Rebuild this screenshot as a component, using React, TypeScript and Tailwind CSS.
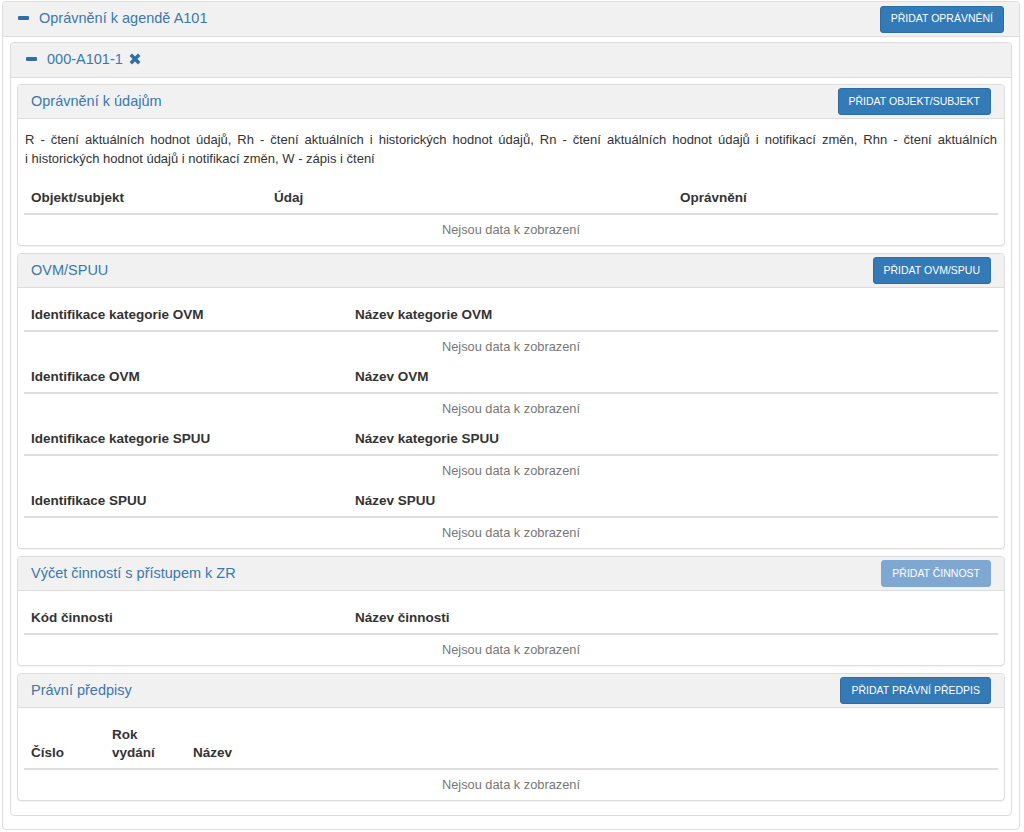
import React from "react";

const Minus = () => <span className="inline-block w-[11px] h-[4px] rounded-[1px] bg-[#2f6ea8] mr-[10px] translate-y-[-1px]" />;

const XMark = () => (
  <svg width="14" height="14" viewBox="0 0 16 16" className="inline-block ml-[5px] translate-y-[-1px]">
    <path d="M1.8 4.6 4.6 1.8 8 5.2 11.4 1.8 14.2 4.6 10.8 8 14.2 11.4 11.4 14.2 8 10.8 4.6 14.2 1.8 11.4 5.2 8Z" fill="#2f6ea8" />
  </svg>
);

function Btn({ label, disabled }: { label: string; disabled?: boolean }) {
  return (
    <button
      className={
        "h-[27px] px-[10px] rounded-[3px] border text-[10.5px] text-white " +
        (disabled ? "bg-[#7ea8d2] border-[#7ea8d2]" : "bg-[#337ab7] border-[#2e6da4]")
      }
    >
      {label}
    </button>
  );
}

function Panel({ title, action, children }: { title: string; action?: React.ReactNode; children: React.ReactNode }) {
  return (
    <div className="mb-[7px] border border-[#dddddd] rounded-[4px] bg-white shadow-[0_1px_1px_rgba(0,0,0,0.05)]">
      <div className="h-[34px] bg-[#f1f1f1] border-b border-[#dddddd] rounded-t-[4px] flex items-center justify-between pl-[13px] pr-[13px]">
        <span className="text-[14.5px] text-[#3a78ae]">{title}</span>
        {action}
      </div>
      <div className="px-[6px]">{children}</div>
    </div>
  );
}

function Head({ cols }: { cols: { label: React.ReactNode; w: string }[] }) {
  return (
    <div className="flex items-end border-b-2 border-[#dddddd] min-h-[32px] text-[13.5px] font-bold text-[#333] leading-[18px]">
      {cols.map((c, i) => (
        <div key={i} className={"px-[7px] pt-[6px] pb-[6px] " + c.w}>
          {c.label}
        </div>
      ))}
    </div>
  );
}

const NoData = () => (
  <div className="h-[30px] flex items-center justify-center text-[12.8px] text-[#777]">Nejsou data k zobrazení</div>
);

export default function App() {
  return (
    <div className="bg-white min-h-[832px] pt-[1px] pl-[2px] pr-[4px]" style={{ fontFamily: '"Liberation Sans", Arial, sans-serif' }}>
      <div className="border border-[#dddddd] rounded-[4px] bg-white">
        <div className="h-[35px] bg-[#f1f1f1] border-b border-[#dddddd] rounded-t-[4px] flex items-center justify-between pl-[15px] pr-[15px]">
          <span className="flex items-center text-[14.5px] text-[#3a78ae]">
            <Minus />
            Oprávnění k agendě A101
          </span>
          <Btn label="PŘIDAT OPRÁVNĚNÍ" />
        </div>
        <div className="px-[7px] pt-[5px] pb-[6px]">
          <div className="mb-[7px] border border-[#dddddd] rounded-[4px] bg-white">
            <div className="h-[35px] bg-[#f1f1f1] border-b border-[#dddddd] rounded-t-[4px] flex items-center pl-[15px]">
              <span className="flex items-center text-[14.5px] text-[#3a78ae]">
                <Minus />
                000-A101-1
                <XMark />
              </span>
            </div>
            <div className="px-[6px] pt-[6px] pb-[7px]">
              <Panel title="Oprávnění k údajům" action={<Btn label="PŘIDAT OBJEKT/SUBJEKT" />}>
                <p className="pt-[11px] mb-[15px] px-[1px] text-[13px] leading-[19px] text-[#333] text-justify">
                  R - čtení aktuálních hodnot údajů, Rh - čtení aktuálních i historických hodnot údajů, Rn - čtení aktuálních hodnot údajů i notifikací změn, Rhn - čtení aktuálních i{"\u00a0"}historických hodnot údajů i notifikací změn, W - zápis i čtení
                </p>
                <Head
                  cols={[
                    { label: "Objekt/subjekt", w: "w-[243px]" },
                    { label: "Údaj", w: "w-[406px]" },
                    { label: "Oprávnění", w: "flex-1" },
                  ]}
                />
                <NoData />
              </Panel>

              <Panel title="OVM/SPUU" action={<Btn label="PŘIDAT OVM/SPUU" />}>
                <div className="pt-[12px]">
                  {[
                    ["Identifikace kategorie OVM", "Název kategorie OVM"],
                    ["Identifikace OVM", "Název OVM"],
                    ["Identifikace kategorie SPUU", "Název kategorie SPUU"],
                    ["Identifikace SPUU", "Název SPUU"],
                  ].map(([a, b]) => (
                    <div key={a}>
                      <Head
                        cols={[
                          { label: a, w: "w-[324px]" },
                          { label: b, w: "flex-1" },
                        ]}
                      />
                      <NoData />
                    </div>
                  ))}
                </div>
              </Panel>

              <Panel title="Výčet činností s přístupem k ZR" action={<Btn label="PŘIDAT ČINNOST" disabled />}>
                <div className="pt-[12px]">
                  <Head
                    cols={[
                      { label: "Kód činnosti", w: "w-[324px]" },
                      { label: "Název činnosti", w: "flex-1" },
                    ]}
                  />
                  <NoData />
                </div>
              </Panel>

              <Panel title="Právní předpisy" action={<Btn label="PŘIDAT PRÁVNÍ PŘEDPIS" />}>
                <div className="pt-[12px]">
                  <Head
                    cols={[
                      { label: "Číslo", w: "w-[81px]" },
                      { label: <>Rok<br />vydání</>, w: "w-[81px]" },
                      { label: "Název", w: "flex-1" },
                    ]}
                  />
                  <NoData />
                </div>
              </Panel>
            </div>
          </div>
        </div>
      </div>
    </div>
  );
}
